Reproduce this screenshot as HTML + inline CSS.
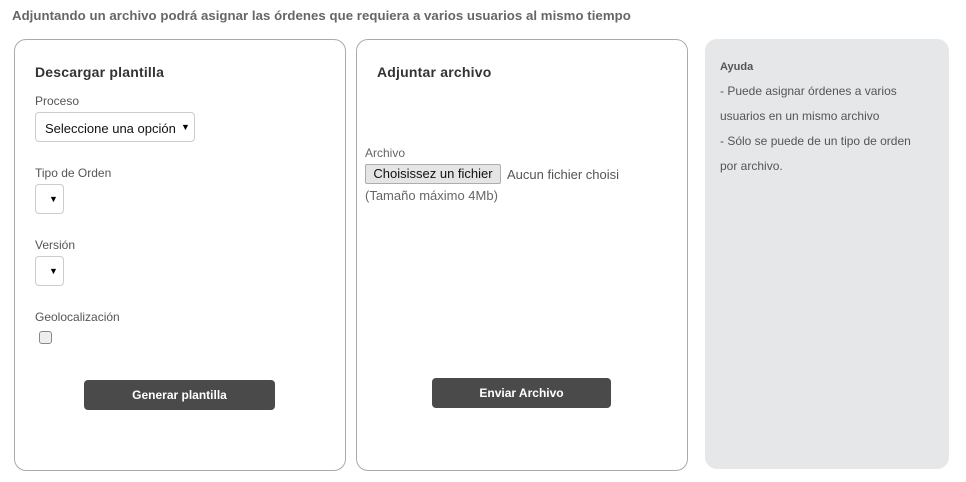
<!DOCTYPE html>
<html><head><meta charset="utf-8"><style>
body{margin:0;width:966px;height:482px;background:#fff;font-family:"Liberation Sans",sans-serif;position:relative;overflow:hidden}
.a{position:absolute}
.t{color:#555;font-size:13px}
.card{position:absolute;border:1px solid #aaa;border-radius:12px;background:#fff}
.h{color:#333;font-size:14px;font-weight:bold;letter-spacing:0.2px}
.sel{position:absolute;border:1px solid #ccc;border-radius:4px;background:#fff;box-sizing:border-box}
.arr{position:absolute;font-size:9px;color:#000}
.btn{position:absolute;background:#4a4a4a;color:#fff;font-size:12px;font-weight:bold;text-align:center;border-radius:4px;line-height:30px}
.help{color:#555;font-size:12px}
</style></head><body>
<div class="a" style="left:12px;top:8px;font-size:13.2px;font-weight:bold;color:#666;letter-spacing:0.05px">Adjuntando un archivo podrá asignar las órdenes que requiera a varios usuarios al mismo tiempo</div>

<div class="card" style="left:14px;top:39px;width:330px;height:430px"></div>
<div class="a h" style="left:35px;top:64px">Descargar plantilla</div>
<div class="a t" style="left:35px;top:94px;font-size:12px">Proceso</div>
<div class="sel" style="left:35px;top:112px;width:160px;height:30px"></div>
<div class="a" style="left:45px;top:121px;font-size:13px;color:#111">Seleccione una opción</div>
<div class="arr" style="left:181px;top:122px">▼</div>
<div class="a t" style="left:35px;top:166px;font-size:12px">Tipo de Orden</div>
<div class="sel" style="left:35px;top:184px;width:29px;height:30px"></div>
<div class="arr" style="left:49px;top:194px">▼</div>
<div class="a t" style="left:35px;top:238px;font-size:12px">Versión</div>
<div class="sel" style="left:35px;top:256px;width:29px;height:30px"></div>
<div class="arr" style="left:49px;top:266px">▼</div>
<div class="a t" style="left:35px;top:310px;font-size:12px">Geolocalización</div>
<div class="a" style="left:39px;top:331px;width:11px;height:11px;border:1px solid #888;border-radius:3px;background:#eee"></div>
<div class="btn" style="left:84px;top:380px;width:191px;height:30px">Generar plantilla</div>

<div class="card" style="left:356px;top:39px;width:330px;height:430px"></div>
<div class="a h" style="left:377px;top:64px">Adjuntar archivo</div>
<div class="a t" style="left:365px;top:146px;font-size:12px;color:#666">Archivo</div>
<div class="a" style="left:365px;top:164px;width:136px;height:20px;border:1px solid #adadad;background:#e5e5e5;box-sizing:border-box;font-size:13px;color:#111;text-align:center;line-height:18px;border-radius:2px">Choisissez un fichier</div>
<div class="a" style="left:507px;top:167px;font-size:13px;color:#555">Aucun fichier choisi</div>
<div class="a" style="left:365px;top:188px;font-size:13px;color:#666">(Tamaño máximo 4Mb)</div>
<div class="btn" style="left:432px;top:378px;width:179px;height:30px">Enviar Archivo</div>

<div class="a" style="left:705px;top:39px;width:244px;height:430px;background:#e6e7e8;border-radius:12px"></div>
<div class="a help" style="left:720px;top:61px;font-size:11px;font-weight:bold">Ayuda</div>
<div class="a help" style="left:720px;top:79px;line-height:25px">- Puede asignar órdenes a varios<br>usuarios en un mismo archivo<br>- Sólo se puede de un tipo de orden<br>por archivo.</div>
</body></html>
